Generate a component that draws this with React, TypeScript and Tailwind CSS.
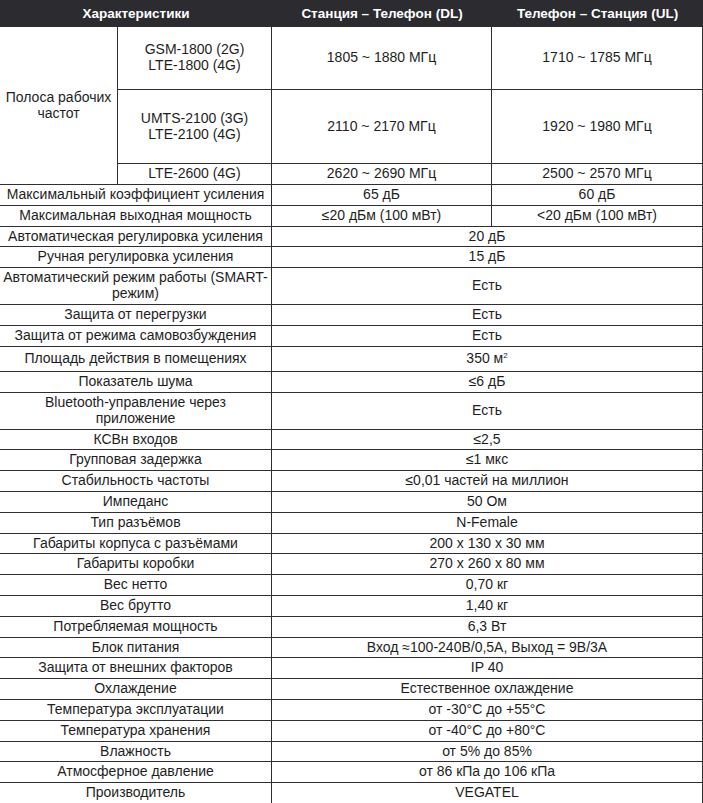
import React from "react";

type Row = { label: React.ReactNode; dl: React.ReactNode; ul?: React.ReactNode; h?: string };

const rows: Row[] = [
  { label: "Максимальный коэффициент усиления", dl: "65 дБ", ul: "60 дБ" },
  { label: "Максимальная выходная мощность", dl: "≤20 дБм (100 мВт)", ul: "<20 дБм (100 мВт)" },
  { label: "Автоматическая регулировка усиления", dl: "20 дБ" },
  { label: "Ручная регулировка усиления", dl: "15 дБ" },
  {
    label: (
      <>
        Автоматический режим работы (SMART-
        <br />
        режим)
      </>
    ),
    dl: "Есть",
    h: "h-[37px]",
  },
  { label: "Защита от перегрузки", dl: "Есть" },
  { label: "Защита от режима самовозбуждения", dl: "Есть" },
  {
    label: "Площадь действия в помещениях",
    dl: (
      <>
        350 м<sup className="text-[8px] top-[-0.6em]">2</sup>
      </>
    ),
    h: "h-[25px]",
  },
  { label: "Показатель шума", dl: "≤6 дБ" },
  {
    label: (
      <>
        Bluetooth-управление через
        <br />
        приложение
      </>
    ),
    dl: "Есть",
    h: "h-[37px]",
  },
  { label: "КСВн входов", dl: "≤2,5" },
  { label: "Групповая задержка", dl: "≤1 мкс" },
  { label: "Стабильность частоты", dl: "≤0,01 частей на миллион" },
  { label: "Импеданс", dl: "50 Ом" },
  { label: "Тип разъёмов", dl: "N-Female" },
  { label: "Габариты корпуса с разъёмами", dl: "200 x 130 x 30 мм" },
  { label: "Габариты коробки", dl: "270 x 260 x 80 мм" },
  { label: "Вес нетто", dl: "0,70 кг" },
  { label: "Вес брутто", dl: "1,40 кг" },
  { label: "Потребляемая мощность", dl: "6,3 Вт" },
  { label: "Блок питания", dl: "Вход ≈100-240В/0,5А, Выход = 9В/3А" },
  { label: "Защита от внешних факторов", dl: "IP 40" },
  { label: "Охлаждение", dl: "Естественное охлаждение" },
  { label: "Температура эксплуатации", dl: "от -30°C до +55°C" },
  { label: "Температура хранения", dl: "от -40°C до +80°C" },
  { label: "Влажность", dl: "от 5% до 85%" },
  { label: "Атмосферное давление", dl: "от 86 кПа до 106 кПа" },
  { label: "Производитель", dl: "VEGATEL" },
];

const cell =
  "border-r border-b border-[#2e2e33] px-0 py-[2px] text-center align-middle whitespace-nowrap";

export default function App() {
  return (
    <div className="w-[703px] bg-white text-[#1e1e1e] font-['Liberation_Sans',Arial,sans-serif] text-[14px] leading-[15.8px]">
      <table className="w-[703px] table-fixed border-separate border-spacing-0">
        <colgroup>
          <col className="w-[118px]" />
          <col className="w-[154px]" />
          <col className="w-[220px]" />
          <col className="w-[211px]" />
        </colgroup>
        <thead>
          <tr className="h-[27px] bg-[#2b2b30] text-white text-[13.5px]">
            <th colSpan={2} className="text-center align-middle font-bold">
              Характеристики
            </th>
            <th className="text-center align-middle font-bold">Станция – Телефон (DL)</th>
            <th className="text-center align-middle font-bold">Телефон – Станция (UL)</th>
          </tr>
        </thead>
        <tbody>
          <tr className="h-[63px]">
            <td rowSpan={3} className={cell}>
              Полоса рабочих
              <br />
              частот
            </td>
            <td className={cell}>
              GSM-1800 (2G)
              <br />
              LTE-1800 (4G)
            </td>
            <td className={cell}>1805 ~ 1880 МГц</td>
            <td className={cell}>1710 ~ 1785 МГц</td>
          </tr>
          <tr className="h-[74px]">
            <td className={cell}>
              UMTS-2100 (3G)
              <br />
              LTE-2100 (4G)
            </td>
            <td className={cell}>2110 ~ 2170 МГц</td>
            <td className={cell}>1920 ~ 1980 МГц</td>
          </tr>
          <tr className="h-[21px]">
            <td className={cell}>LTE-2600 (4G)</td>
            <td className={cell}>2620 ~ 2690 МГц</td>
            <td className={cell}>2500 ~ 2570 МГц</td>
          </tr>
          {rows.map((r, i) => (
            <tr key={i} className={r.h ?? ""}>
              <td colSpan={2} className={cell}>
                {r.label}
              </td>
              {r.ul !== undefined ? (
                <>
                  <td className={cell}>{r.dl}</td>
                  <td className={cell}>{r.ul}</td>
                </>
              ) : (
                <td colSpan={2} className={cell}>
                  {r.dl}
                </td>
              )}
            </tr>
          ))}
        </tbody>
      </table>
    </div>
  );
}
